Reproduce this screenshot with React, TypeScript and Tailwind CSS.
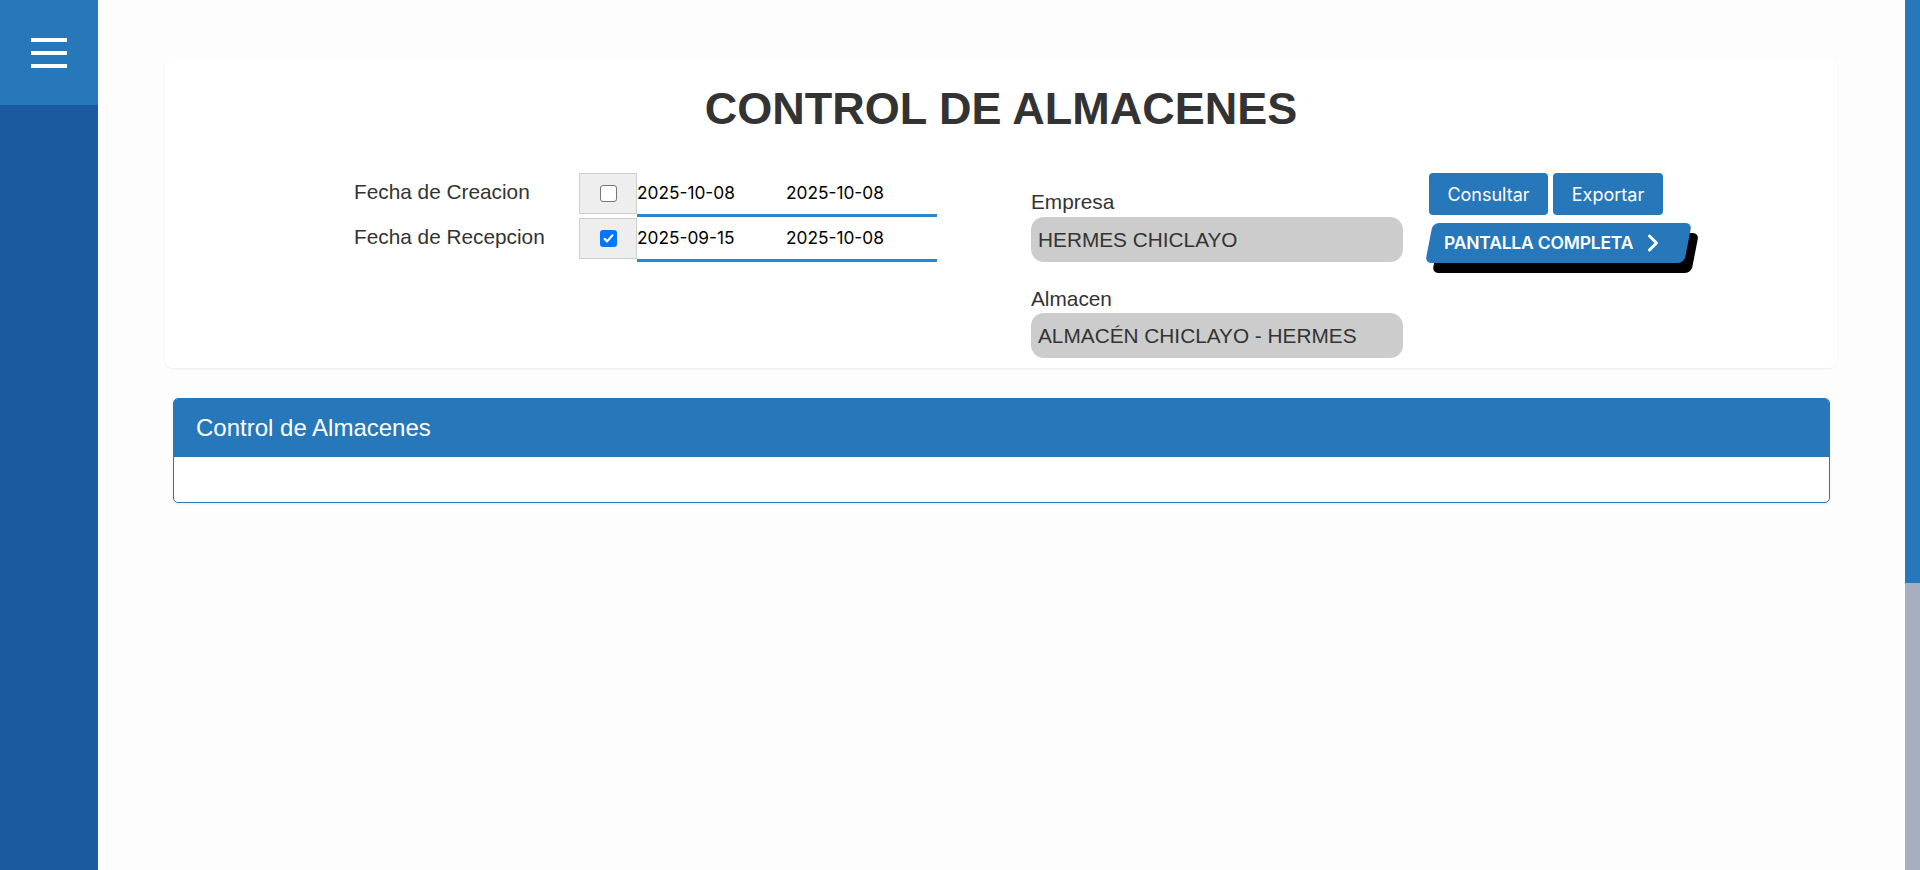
import { ChevronRight } from "lucide-react";

function Check({ checked }: { checked: boolean }) {
  if (checked) {
    return (
      <span className="flex h-[17px] w-[17px] items-center justify-center rounded-[3px] bg-[#0075ff]">
        <svg width="13" height="13" viewBox="0 0 13 13" fill="none">
          <path d="M2.6 6.9 L5.2 9.4 L10.4 3.4" stroke="#fff" strokeWidth="2.2" strokeLinecap="round" strokeLinejoin="round" />
        </svg>
      </span>
    );
  }
  return <span className="block h-[17px] w-[17px] rounded-[3px] border-[1.5px] border-[#767676] bg-white" />;
}

function DateRow({ label, checked, from, to }: { label: string; checked: boolean; from: string; to: string }) {
  return (
    <div className="flex items-start">
      <span className="flex h-[41px] w-[225px] items-center pb-[3px] text-[20.8px] leading-[24px] text-[#333]">{label}</span>
      <div className="flex h-[41px] w-[58px] items-center justify-center border border-[#cfcfcf] bg-[#eeeeee]">
        <Check checked={checked} />
      </div>
      <div className="flex h-[44px] w-[300px] items-center border-b-[3px] border-[#2a85cb] pb-[2px] font-['Inter',sans-serif] text-[17.3px] text-black">
        <span className="w-[149px]">{from}</span>
        <span>{to}</span>
      </div>
    </div>
  );
}

export default function App() {
  return (
    <div className="flex h-[870px] w-full overflow-hidden bg-white font-['Liberation_Sans',Arial,sans-serif]">
      <aside className="flex w-[98px] shrink-0 flex-col bg-[#1b5aa0]">
        <div className="flex h-[105px] flex-col items-center justify-center gap-[9px] bg-[#2777bb]">
          <span className="block h-[4px] w-[36px] bg-white" />
          <span className="block h-[4px] w-[36px] bg-white" />
          <span className="block h-[4px] w-[36px] bg-white" />
        </div>
      </aside>

      <main className="min-w-0 flex-1 bg-[#fdfdfd]">
        <section className="ml-[67px] mr-[68px] mt-[58px] h-[310px] rounded-lg bg-white pt-[28px] shadow-[0_1px_2px_rgba(0,0,0,0.07)]">
          <h1 className="text-center text-[45px] font-bold leading-[45px] text-[#333]">CONTROL DE ALMACENES</h1>
          <div className="mt-[42px] flex items-start">
            <div className="ml-[189px] flex flex-col gap-[1px]">
              <DateRow label="Fecha de Creacion" checked={false} from="2025-10-08" to="2025-10-08" />
              <DateRow label="Fecha de Recepcion" checked={true} from="2025-09-15" to="2025-10-08" />
            </div>

            <div className="ml-[94px] mt-[17px] w-[372px] text-[20.8px] text-[#333]">
              <div className="leading-[24px]">Empresa</div>
              <div className="mt-[3px] flex h-[45px] items-center rounded-[13px] bg-[#cccccc] px-[7px]">HERMES CHICLAYO</div>
              <div className="mt-[25px] leading-[24px]">Almacen</div>
              <div className="mt-[2px] flex h-[45px] items-center rounded-[13px] bg-[#cccccc] px-[7px]">ALMACÉN CHICLAYO - HERMES</div>
            </div>

            <div className="ml-[26px] flex flex-col">
              <div className="flex gap-[5px]">
                <button className="h-[42px] w-[119px] rounded-[4px] bg-[#2777bb] font-['Inter',sans-serif] text-[18px] text-white">Consultar</button>
                <button className="h-[42px] w-[110px] rounded-[4px] bg-[#2777bb] font-['Inter',sans-serif] text-[18px] text-white">Exportar</button>
              </div>
              <div className="mt-[8px] flex h-[40px] w-[259px] -skew-x-[11deg] items-center rounded-md bg-[#2777bb] pl-[15px] shadow-[9px_10px_0_#000]">
                <span className="flex skew-x-[11deg] items-center gap-[6px] font-['Inter',sans-serif] text-[17.5px] font-semibold tracking-[-0.2px] text-white">
                  PANTALLA COMPLETA
                  <ChevronRight size={28} strokeWidth={2.6} />
                </span>
              </div>
            </div>
          </div>
        </section>

        <section className="mx-[75px] mt-[30px] overflow-hidden rounded-[5px] border border-[#2777bb] bg-white shadow-[0_1px_3px_rgba(0,0,0,0.08)]">
          <div className="flex h-[58px] items-center bg-[#2777bb] pl-[22px] text-[24px] text-white">Control de Almacenes</div>
          <div className="h-[45px]" />
        </section>
      </main>

      <div className="flex w-[15px] shrink-0 flex-col">
        <div className="h-[583px] bg-[#2777bb]" />
        <div className="flex-1 bg-[#a6aec0]" />
      </div>
    </div>
  );
}
